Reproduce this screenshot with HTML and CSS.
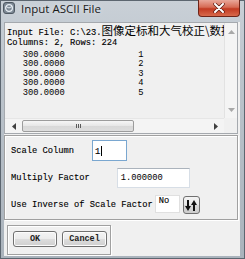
FILE: index.html
```html
<!DOCTYPE html>
<html lang="en">
<head>
    <meta charset="UTF-8">
    <title>Input ASCII File</title>
    <link rel="stylesheet" href="styles.css">
</head>
<body>
    <div class="window">
        <div class="titlebar">
            <svg class="app-icon" width="12" height="12" viewBox="0 0 12 12">
                <rect x="0.5" y="0.5" width="11" height="11" rx="2.5" fill="#7e8a96" stroke="#4e5862"/>
                <circle cx="6" cy="6" r="3.4" fill="none" stroke="#e8eef4" stroke-width="1.2"/>
                <path d="M3 4.5 L6 6 L9 4.5" fill="none" stroke="#e8eef4" stroke-width="1"/>
            </svg>
            <span class="title">Input ASCII File</span>
            <div class="close-btn">
                <svg width="12" height="10" viewBox="0 0 12 10">
                    <path d="M2 1 L10 9 M10 1 L2 9" stroke="#5a1a12" stroke-width="3.4" stroke-linecap="round"/>
                    <path d="M2 1 L10 9 M10 1 L2 9" stroke="#ffffff" stroke-width="2" stroke-linecap="round"/>
                </svg>
            </div>
        </div>

        <div class="frame">
            <div class="client">
                <div class="textbox">
                    <div class="text-view">
                        <div class="line head">Input File: C:\23.<span class="cjk">图像定标和大气校正\数据</span></div>
                        <div class="line head">Columns: 2, Rows: 224</div>
                        <div class="line data">   300.0000              1</div>
                        <div class="line data">   300.0000              2</div>
                        <div class="line data">   300.0000              3</div>
                        <div class="line data">   300.0000              4</div>
                        <div class="line data">   300.0000              5</div>
                    </div>
                    <div class="vscroll">
                        <div class="sb-arrow">
                            <svg width="7" height="4" viewBox="0 0 7 4"><path d="M0 4 L3.5 0 L7 4 Z" fill="#a8a8a8"/></svg>
                        </div>
                        <div class="sb-track"></div>
                        <div class="sb-arrow">
                            <svg width="7" height="4" viewBox="0 0 7 4"><path d="M0 0 L3.5 4 L7 0 Z" fill="#a8a8a8"/></svg>
                        </div>
                    </div>
                    <div class="hscroll">
                        <div class="sb-arrow">
                            <svg width="4" height="7" viewBox="0 0 4 7"><path d="M4 0 L0 3.5 L4 7 Z" fill="#404040"/></svg>
                        </div>
                        <div class="thumb"><span class="grip"></span></div>
                        <div class="sb-track"></div>
                        <div class="sb-arrow">
                            <svg width="4" height="7" viewBox="0 0 4 7"><path d="M0 0 L4 3.5 L0 7 Z" fill="#404040"/></svg>
                        </div>
                    </div>
                    <div class="sb-corner"></div>
                </div>

                <div class="group">
                    <div class="row row-scale">
                        <span class="label">Scale Column</span>
                        <div class="field field-scale">1<span class="caret"></span></div>
                    </div>
                    <div class="row row-factor">
                        <span class="label">Multiply Factor</span>
                        <div class="field field-factor">1.000000</div>
                    </div>
                    <div class="row row-inverse">
                        <span class="label">Use Inverse of Scale Factor</span>
                        <div class="field field-no">No</div>
                        <div class="toggle-btn">
                            <svg width="12" height="11" viewBox="0 0 12 11">
                                <path d="M3 0 V7" stroke="#111" stroke-width="2"/>
                                <path d="M0 6 L3 11 L6 6 Z" fill="#111"/>
                                <path d="M9 11 V4" stroke="#111" stroke-width="2"/>
                                <path d="M6 5 L9 0 L12 5 Z" fill="#111"/>
                            </svg>
                        </div>
                    </div>
                </div>

                <div class="bottom">
                    <div class="button-frame">
                        <div class="btn btn-ok">OK</div>
                        <div class="btn btn-cancel">Cancel</div>
                    </div>
                </div>
            </div>
        </div>
    </div>
</body>
</html>
```

FILE: styles.css
```css
body {
    margin: 0;
    width: 245px;
    height: 259px;
    overflow: hidden;
    font-family: "Liberation Mono", monospace;
    font-size: 8.75px;
    color: #000;
}

.window {
    width: 245px;
    height: 259px;
    box-sizing: border-box;
    display: flex;
    flex-direction: column;
    background: linear-gradient(#c9d0d7, #bcc4cc 30%, #aab3bc);
    box-shadow: inset 0 0 0 1px #5c6670;
}

/* title bar */

.titlebar {
    height: 22px;
    flex: none;
    display: flex;
    align-items: flex-start;
}

.app-icon {
    margin: 2px 0 0 3px;
}

.title {
    margin: 1px 0 0 6px;
    font-family: "Open Sans", "Noto Sans", sans-serif;
    font-size: 11.5px;
    color: #1a1a1a;
    text-shadow: 0 0 4px #e6eaee;
}

.close-btn {
    margin-left: auto;
    margin-right: 5px;
    width: 42px;
    height: 17px;
    box-sizing: border-box;
    border: 1px solid #6e2418;
    border-top: none;
    border-radius: 0 0 4px 4px;
    background: linear-gradient(#e9a89a, #d66b55 45%, #c23a22 55%, #d86a4c);
    display: flex;
    align-items: center;
    justify-content: center;
}

/* window body */

.frame {
    flex: 1;
    display: flex;
    padding: 0 5px 3px 4px;
}

.client {
    flex: 1;
    background: #f0f0f0;
    display: flex;
    flex-direction: column;
}

/* text view with scroll bars */

.textbox {
    height: 112px;
    margin-right: 2px;
    box-sizing: border-box;
    border: 1px solid #a5a9ae;
    display: grid;
    grid-template-columns: 1fr 13px;
    grid-template-rows: 1fr 15px;
    background: #f0f0f0;
}

.text-view {
    overflow: hidden;
    padding: 6px 0 0 2px;
    line-height: 9.6px;
}

.line {
    height: 9.6px;
    white-space: pre;
}

.head {
    -webkit-text-stroke: 0.12px #000;
}

.cjk {
    font-family: "Noto Sans CJK SC", sans-serif;
    font-size: 11.5px;
    line-height: 0;
    -webkit-text-stroke: 0;
}

.data {
    position: relative;
    top: 2.5px;
}

.vscroll {
    display: flex;
    flex-direction: column;
    border-left: 1px solid #e2e2e2;
    background: #f4f4f4;
}

.hscroll {
    display: flex;
    align-items: center;
    background: #f4f4f4;
    border-top: 1px solid #e6e6e6;
}

.sb-arrow {
    flex: none;
    width: 17px;
    height: 17px;
    display: flex;
    align-items: center;
    justify-content: center;
}

.vscroll .sb-arrow {
    width: auto;
}

.hscroll .sb-arrow {
    height: auto;
}

.sb-track {
    flex: 1;
}

.thumb {
    width: 112px;
    height: 12px;
    box-sizing: border-box;
    border: 1px solid #9c9c9c;
    border-radius: 2px;
    background: linear-gradient(#f6f6f6, #e6e6e6 50%, #d8d8d8 51%, #dedede);
    display: flex;
    align-items: center;
    justify-content: center;
}

.grip {
    width: 5px;
    height: 4px;
    background: repeating-linear-gradient(90deg, #5a5a5a 0 1px, transparent 1px 2px);
}

.sb-corner {
    background: #f0f0f0;
}

/* scale options */

.group {
    height: 85px;
    margin: 1px 2px 0 0;
    box-sizing: border-box;
    border: 1px solid #a0a0a0;
    box-shadow: inset 1px 1px 0 #fff, 1px 1px 0 #fff;
    padding: 4px 0 0 6px;
    display: flex;
    flex-direction: column;
    gap: 7px;
}

.row {
    display: flex;
    align-items: center;
}

.label {
    white-space: pre;
    color: #000;
    -webkit-text-stroke: 0.12px #000;
}

.field {
    box-sizing: border-box;
    background: #fff;
    border: 1px solid #d7dee6;
    border-top-color: #abb3bc;
    font-family: "Liberation Mono", monospace;
    font-size: 8.75px;
    line-height: 9px;
    white-space: pre;
}

.field-scale {
    width: 35px;
    height: 21px;
    margin-left: 18px;
    padding: 5px 0 0 2px;
    border-color: #7aa7d0;
    -webkit-text-stroke: 0.12px #000;
}

.caret {
    display: inline-block;
    width: 1px;
    height: 10px;
    margin-left: 1px;
    vertical-align: -2px;
    background: #000;
}

.field-factor {
    width: 73px;
    height: 20px;
    margin-left: 27px;
    padding: 5px 0 0 3px;
}

.row-factor,
.row-inverse {
    height: 20px;
}

.field-no {
    width: 25px;
    height: 18px;
    margin-left: 2px;
    padding: 1px 0 0 3px;
    align-self: flex-start;
    border-color: #e0e0e0;
    -webkit-text-stroke: 0.12px #000;
}

.toggle-btn {
    width: 17px;
    height: 18px;
    margin-left: 3px;
    box-sizing: border-box;
    border: 1px solid #707070;
    border-radius: 3px;
    background: linear-gradient(#f4f4f4, #e8e8e8 50%, #d8d8d8 51%, #cdcdcd);
    display: flex;
    align-items: center;
    justify-content: center;
}

/* dialog buttons */

.bottom {
    flex: 1;
    padding: 5px 0 0 3px;
}

.button-frame {
    width: 104px;
    height: 30px;
    box-sizing: border-box;
    border: 1px solid #a0a0a0;
    box-shadow: inset 1px 1px 0 #fff, 1px 1px 0 #fff;
    padding: 5px 0 0 5px;
    display: flex;
    gap: 5px;
}

.btn {
    height: 16px;
    box-sizing: border-box;
    border: 1px solid #707070;
    border-radius: 3px;
    background: linear-gradient(#f4f4f4, #ebebeb 50%, #dddddd 51%, #cfcfcf);
    box-shadow: inset 0 0 0 1px #fcfcfc;
    display: flex;
    align-items: center;
    justify-content: center;
    font-weight: bold;
    font-size: 8.5px;
    color: #222;
}

.btn-ok {
    width: 44px;
}

.btn-cancel {
    width: 45px;
}
```
